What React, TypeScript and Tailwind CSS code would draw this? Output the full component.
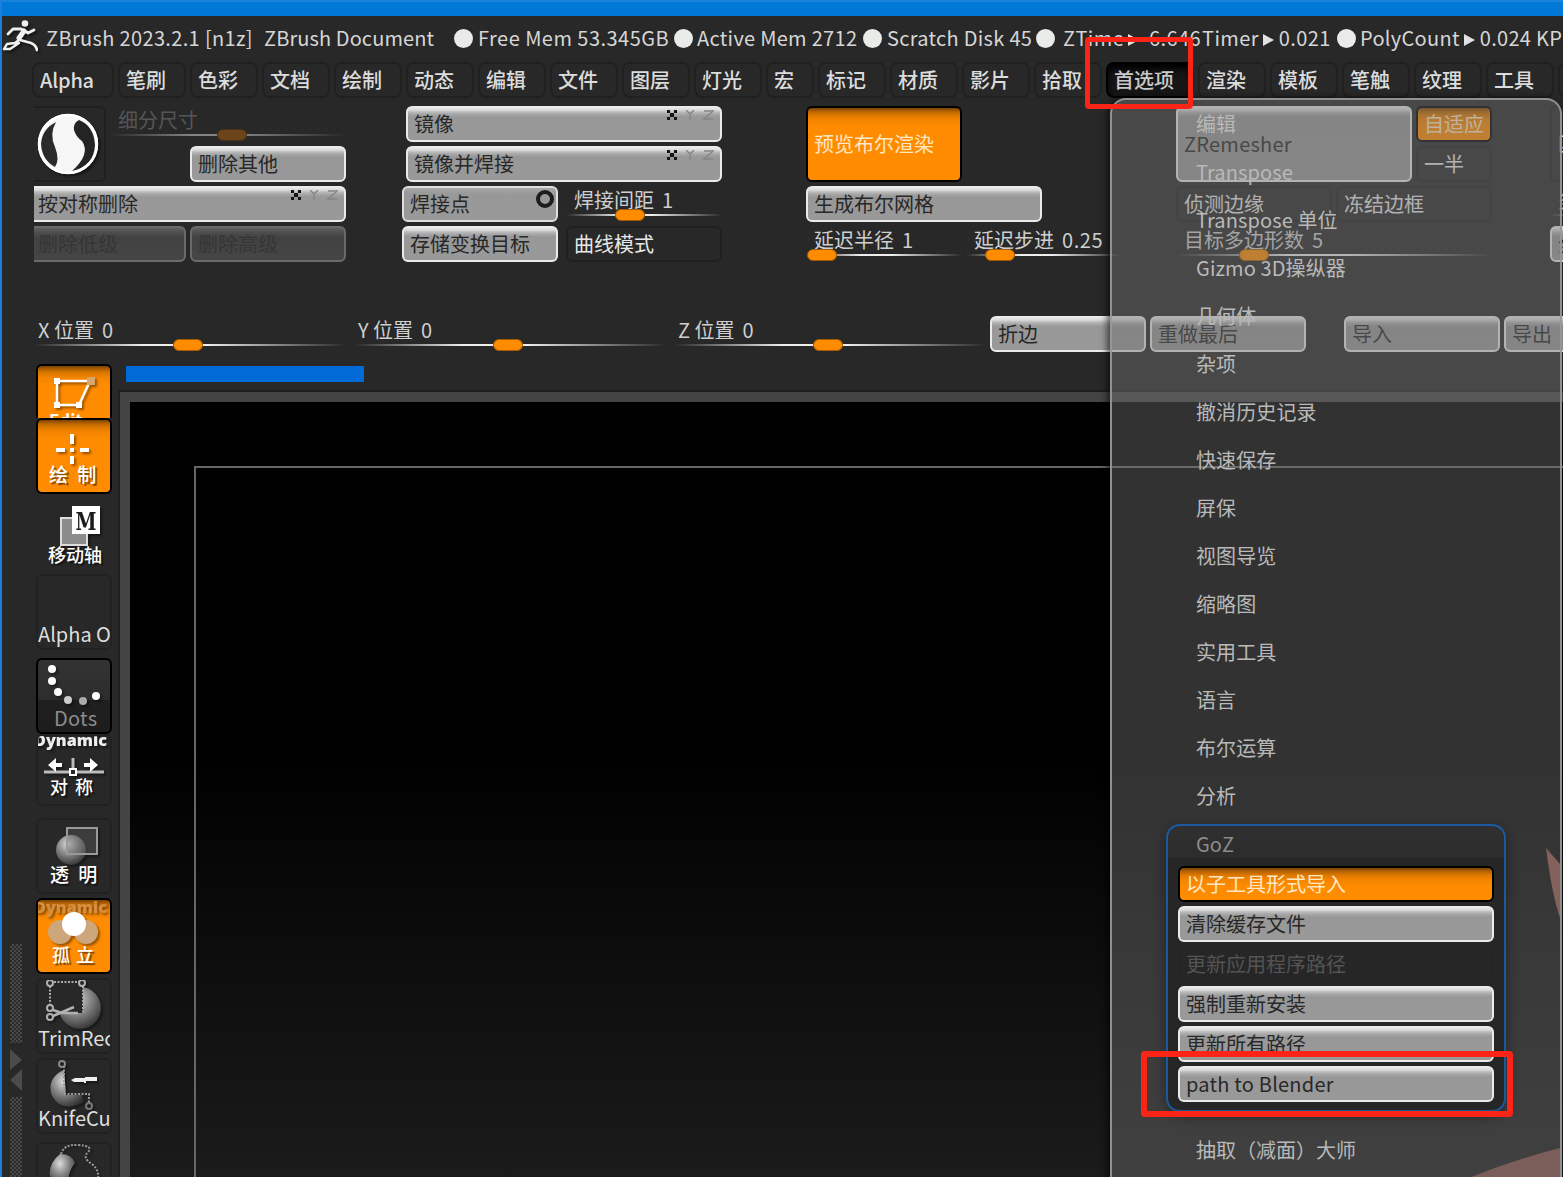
import React from "react";

type Kid = { children?: React.ReactNode };

const FONT = "font-['Noto_Sans_CJK_SC','Noto_Sans',sans-serif]";

function Tab({ label, w, active, ls = "" }: { label: string; w: string; active?: boolean; ls?: string }) {
  return (
    <div className={`h-9 shrink-0 rounded-[8px] border-2 pl-[6px] leading-[31px] text-[20px] font-medium overflow-hidden ${w} ${active ? "border-black bg-[#161616] shadow-[inset_0_5px_6px_#000] text-[#c9c9c9]" : "border-[#202020] text-[#dcdcdc]"}`}>
      <span className={ls}>{label}</span>
    </div>
  );
}

function Btn({ label, w, kind = "light", h = "h-9", children, square = "", ls = "" }: { label: string; w: string; kind?: "light" | "flat" | "off" | "dark" | "orange" | "ghost"; h?: string; square?: string; ls?: string } & Kid) {
  const kinds = {
    light: "border-[#ebebeb] bg-[linear-gradient(#e6e6e6_0px,#dadada_2px,#bcbcbc_4px,#a8a8a8_6px,#989898_9px,#999_100%)] text-[#282828]",
    flat: "border-[#dedede] bg-[linear-gradient(#a8a8a8_0px,#989898_6px,#999_100%)] text-[#282828]",
    off: "border-[#6a6a6a] bg-[linear-gradient(#606060_0px,#4c4c4c_5px,#424242_10px,#464646_100%)] text-[#363636]",
    dark: "border-[#202020] text-[#e8e8e8]",
    orange: "border-black bg-[linear-gradient(#784300_0px,#b06000_3px,#dc7800_7px,#f48500_12px,#ff8c00_19px,#ff8c00_100%)] text-[#ffe7c4]",
    ghost: "border-[#242424] text-[#545454]",
  };
  return (
    <div className={`relative flex shrink-0 items-center border-2 pl-[6px] pb-px text-[20px] leading-none whitespace-nowrap overflow-hidden ${w} ${h} ${kinds[kind]} ${square || "rounded-[6px]"}`}>
      <span className={`leading-[28px] ${ls}`}>{label}</span>
      {children}
    </div>
  );
}

function Axes() {
  return (
    <svg className="absolute right-[5px] top-[2px]" width="48" height="10" viewBox="0 0 48 10">
      <path d="M0 0h3v3h4v-3h3v3h-3v4h3v3h-3v-3h-4v3h-3v-3h3v-4h-3z" fill="#151515" />
      <path d="M19 0l4 4l4-4M23 4v6M37 1h9l-9 8h9" fill="none" stroke="#858585" strokeWidth="1.400" />
    </svg>
  );
}

function Slider({ label, value = "", w, knob, off, ls = "" }: { label: string; value?: string; w: string; knob: string; off?: boolean; ls?: string }) {
  return (
    <div className={`relative h-9 shrink-0 ${w}`}>
      <div className={`h-[28px] pl-2 text-[20px] leading-[27px] whitespace-pre ${off ? "text-[#565656]" : "text-[#cfcfcf]"}`}>
        <span className={ls}>{label}</span>
        <span className="ml-[8px] tracking-[0.6px]">{value}</span>
      </div>
      <div className={`h-[2px] ${off ? "bg-[linear-gradient(90deg,transparent,#858585_35%,#858585_55%,transparent)]" : "bg-[linear-gradient(90deg,transparent,#eee_35%,#eee_55%,transparent)]"}`} />
      <div className={`absolute top-[23px] h-3 w-[30px] rounded-[6px] border ${knob} ${off ? "border-[#4a3015] bg-[#6b4519]" : "border-[#a35b05] bg-[#ff8c00]"}`} />
    </div>
  );
}

function Dot() {
  return <span className="h-[19px] w-[19px] shrink-0 rounded-full bg-[#e9ebe9]" />;
}

function Arrow() {
  return (
    <svg className="ml-[4px] mr-[5px] inline-block align-[0px]" width="11" height="12" viewBox="0 0 11 12"><path d="M0 0L11 6L0 12Z" fill="#e2e2e2" /></svg>
  );
}

function TitleBar() {
  return (
    <header className="flex h-[46px] items-center whitespace-pre text-[20px] leading-[44px] text-[#d6d6d6] pb-[2px]">
      <svg className="mr-2 shrink-0 drop-shadow-[2px_2px_1px_rgba(0,0,0,.5)]" width="36" height="38" viewBox="0 0 36 38" fill="none" stroke="#eef1ee" strokeLinecap="round" strokeLinejoin="round">
        <circle cx="23" cy="4.500" r="3.300" fill="#eef1ee" stroke="none" />
        <path d="M6 15L11 10L19 10L26 14L32 11" strokeWidth="2.800" />
        <path d="M22 12L17 19" strokeWidth="5" />
        <path d="M18 21L29 24Q34 26 35 31" strokeWidth="2.800" />
        <path d="M17 21L13 24L5 25L2 30L8 30L17 24" strokeWidth="2.400" />
      </svg>
      <span className="w-[218px] shrink-0 tracking-[0.350px]">ZBrush 2023.2.1 [n1z]</span>
      <span className="w-[190px] shrink-0 tracking-[0.100px]">ZBrush Document</span>
      <Dot />
      <span className="ml-[5px] w-[196px] shrink-0 tracking-[0.470px]">Free Mem 53.345GB</span>
      <Dot />
      <span className="ml-[4px] w-[166px] shrink-0 tracking-[0.300px]">Active Mem 2712</span>
      <Dot />
      <span className="ml-[5px] w-[149px] shrink-0 tracking-[0.300px]">Scratch Disk 45</span>
      <Dot />
      <span className="ml-[8px] w-[139px] shrink-0 tracking-[0.400px]">ZTime<Arrow /> 6.646</span>
      <span className="w-[135px] shrink-0 tracking-[0.400px]">Timer<Arrow />0.021</span>
      <Dot />
      <span className="ml-[4px] shrink-0 tracking-[0.300px]">PolyCount<Arrow />0.024 KP</span>
    </header>
  );
}

function MenuBar() {
  return (
    <nav className="ml-[30px] flex h-9 gap-1">
      <Tab label="Alpha" w="w-[82px]" ls="tracking-[-0.200px]" />
      {["笔刷", "色彩", "文档", "绘制", "动态", "编辑", "文件", "图层", "灯光"].map((l) => (
        <Tab key={l} label={l} w="w-[68px]" />
      ))}
      <Tab label="宏" w="w-[48px]" />
      {["标记", "材质", "影片", "拾取"].map((l) => (
        <Tab key={l} label={l} w="w-[68px]" />
      ))}
      <Tab label="首选项" w="w-[88px]" active />
      {["渲染", "模板", "笔触", "纹理", "工具"].map((l) => (
        <Tab key={l} label={l} w="w-[68px]" />
      ))}
      <Tab label="" w="w-[68px]" />
    </nav>
  );
}

function Toolbar() {
  return (
    <section className="ml-[32px] mt-2 flex h-[156px]">
      <div className="flex w-[312px] shrink-0 flex-col gap-1">
        <div className="flex h-[76px]">
          <div className="flex w-[72px] shrink-0 items-center rounded-r-[6px] border-2 border-l-0 border-[#202020]">
            <svg className="drop-shadow-[2px_2px_1px_rgba(0,0,0,.5)]" width="68" height="68" viewBox="0 0 68 68">
              <circle cx="34" cy="34" r="30" fill="#f6f6f6" />
              <path d="M22 12Q15 24 21 37Q26 50 21 57Q8 50 7 34Q8 19 22 12Z" fill="#2b2b2b" />
              <path d="M45 10Q39 13 40 20Q42 27 48 31Q57 44 38 61Q60 56 61 35Q60 16 45 10Z" fill="#242424" />
              <circle cx="34" cy="34" r="29" fill="none" stroke="#fff" strokeWidth="2.500" />
            </svg>
          </div>
          <div className="flex flex-1 flex-col gap-1">
            <div className="ml-[4px]"><Slider label="细分尺寸" w="w-[236px]" knob="left-[107px]" off /></div>
            <div className="ml-[84px]"><Btn label="删除其他" w="w-[156px]" /></div>
          </div>
        </div>
        <Btn label="按对称删除" w="w-[312px]" square="rounded-r-[6px] border-l-0 !pl-1"><Axes /></Btn>
        <div className="flex gap-1">
          <Btn label="删除低级" w="w-[152px]" kind="off" square="rounded-r-[6px] border-l-0 !pl-1" />
          <Btn label="删除高级" w="w-[156px]" kind="off" />
        </div>
      </div>
      <div className="ml-[56px] flex w-[320px] shrink-0 flex-col gap-1">
        <div className="ml-1 flex flex-col gap-1">
          <Btn label="镜像" w="w-[316px]"><Axes /></Btn>
          <Btn label="镜像并焊接" w="w-[316px]"><Axes /></Btn>
        </div>
        <div className="flex gap-2">
          <Btn label="焊接点" w="w-[156px]" kind="flat">
            <span className="absolute right-[2px] top-[2px] h-[18px] w-[18px] rounded-full border-4 border-[#1c1c1c]" />
          </Btn>
          <Slider label="焊接间距" value="1" w="w-[156px]" knob="left-[49px]" />
        </div>
        <div className="flex gap-2">
          <Btn label="存储变换目标" w="w-[156px]" />
          <Btn label="曲线模式" w="w-[156px]" kind="dark" />
        </div>
      </div>
      <div className="ml-[84px] flex w-[316px] shrink-0 flex-col gap-1">
        <Btn label="预览布尔渲染" w="w-[156px]" h="h-[76px]" kind="orange" />
        <Btn label="生成布尔网格" w="w-[236px]" />
        <div className="flex gap-1">
          <Slider label="延迟半径" value="1" w="w-[156px]" knob="left-[1px]" />
          <Slider label="延迟步进" value="0.25" w="w-[156px]" knob="left-[19px]" />
        </div>
      </div>
      <div className="ml-[54px] flex w-[316px] shrink-0 flex-col gap-1">
        <div className="flex gap-1">
          <Btn label="ZRemesher" w="w-[236px]" h="h-[76px]" ls="tracking-[0.250px]" />
          <div className="flex flex-col gap-1">
            <Btn label="自适应" w="w-[76px]" kind="orange" />
            <Btn label="一半" w="w-[76px]" kind="dark" />
          </div>
        </div>
        <div className="flex gap-1">
          <Btn label="侦测边缘" w="w-[156px]" kind="dark" />
          <Btn label="冻结边框" w="w-[156px]" kind="dark" />
        </div>
        <Slider label="目标多边形数" value="5" w="w-[316px]" knob="left-[63px]" />
      </div>
      <div className="ml-[58px] flex shrink-0 flex-col gap-1">
        <Btn label="匹" w="w-[156px]" h="h-[76px]" kind="dark" />
        <Slider label="多" w="w-[156px]" knob="left-[63px]" />
        <Btn label="全" w="w-[156px]" />
      </div>
    </section>
  );
}

function PositionRow() {
  return (
    <section className="ml-[32px] mt-[54px] flex h-9">
      {["X 位置", "Y 位置", "Z 位置"].map((l) => (
        <div key={l} className="mr-2 -ml-[4px] pl-[4px] shrink-0 w-[316px]">
          <Slider label={l} value="0" w="w-[312px]" knob="left-[139px]" ls="-ml-[4px]" />
        </div>
      ))}
      <div className="-ml-[4px] flex gap-1">
        <Btn label="折边" w="w-[156px]" />
        <Btn label="重做最后" w="w-[156px]" />
        <div className="ml-[34px] flex gap-1">
          <Btn label="导入" w="w-[156px]" />
          <Btn label="导出" w="w-[156px]" />
        </div>
      </div>
    </section>
  );
}

function Tool({ h = "h-[76px]", mt = "", kind = "dark", label, lc = "", children }: { h?: string; mt?: string; kind?: "dark" | "orange" | "none" | "pressed"; label: string; lc?: string } & Kid) {
  const kinds = {
    dark: "border-[#222]",
    orange: "border-black bg-[linear-gradient(#784300_0px,#b06000_3px,#dc7800_7px,#f48500_12px,#ff8c00_20px,#ff8c00_100%)]",
    none: "border-transparent",
    pressed: "border-black bg-[linear-gradient(#333_0px,#2d2d2d_40px,#1f1f1f_40px,#1d1d1d_100%)]",
  };
  return (
    <div className={`relative w-[76px] shrink-0 overflow-hidden rounded-[6px] border-2 ${h} ${mt} ${kinds[kind]}`}>
      <svg className="absolute -left-[2px] -top-[2px] drop-shadow-[2px_2px_1px_rgba(0,0,0,.4)]" width="76" height="76" viewBox="0 0 76 76" fill="none">{children}</svg>
      <span className={`absolute whitespace-pre ${lc}`}>{label}</span>
    </div>
  );
}

const CN = "bottom-[4px] text-[19px] font-medium leading-[28px] text-white [text-shadow:2px_2px_1px_rgba(0,0,0,.5)]";
const EN = "bottom-[2px] left-0 text-[20px] leading-[24px] text-[#dedede]";

function ToolColumn() {
  return (
    <div className="flex w-[76px] flex-col">
      <Tool h="h-[54px] rounded-b-none border-b-0" kind="orange" label="Edit" lc="left-[11px] top-[43px] text-[17px] leading-[22px] font-bold text-white">
        <path d="M21 17H54L43 41H21Z" stroke="#fff" strokeWidth="2.500" />
        <path d="M18 14h6v6h-6zM18 38h6v6h-6zM40 38h6v6h-6z" fill="#fff" />
        <path d="M51 13h8v8h-8z" fill="#d6a66c" />
      </Tool>
      <Tool kind="orange" label="绘 制" lc={CN + " left-[11px] [word-spacing:5px]"}>
        <path d="M36 16v10M36 38v8M20 32h9M44 32h9M34 32h4" stroke="#fff" strokeWidth="4" />
      </Tool>
      <Tool kind="none" label="移动轴" lc={CN + " !bottom-0 left-[10px] !text-[18px]"}>
        <rect x="25" y="24" width="26" height="27" fill="#8c8c8c" stroke="#ddd" strokeWidth="2" />
        <rect x="36" y="12" width="28" height="28" fill="#fff" />
        <text x="50" y="36" textAnchor="middle" fontSize="24" fontWeight="900" fill="#1c1c1c" fontFamily="DejaVu Serif" textLength="21" lengthAdjust="spacingAndGlyphs">M</text>
      </Tool>
      <Tool mt="mt-1" label="Alpha O" lc={EN} />
      <Tool mt="mt-2" kind="pressed" label="Dots" lc="bottom-[2px] left-[16px] text-[20px] leading-[24px] tracking-[0.3px] text-[#8c8c8c]">
        <g fill="#fff">
          <circle cx="16" cy="11" r="4" /><circle cx="16" cy="23" r="4" /><circle cx="22" cy="34" r="4" /><circle cx="60" cy="38" r="4" />
          <circle cx="32" cy="42" r="4" fill="#ccc" /><circle cx="47" cy="43" r="4" fill="#aaa" />
        </g>
      </Tool>
      <Tool h="h-[72px]" label="对 称" lc={CN + " left-[12px] !text-[18px] [word-spacing:3px]"}>
        <path d="M8 38h60M37 24v10" stroke="#bbb" strokeWidth="3" />
        <rect x="34" y="35" width="6" height="6" fill="#282828" stroke="#fff" strokeWidth="2" />
        <path d="M12 31l8-7v5h6v4h-6v5zM62 31l-8-7v5h-6v4h6v5z" fill="#fff" />
        <text x="-2" y="12" fontSize="15" fontWeight="900" fill="#eee" fontFamily="Noto Sans" textLength="73" lengthAdjust="spacingAndGlyphs">Dynamic</text>
      </Tool>
      <Tool mt="mt-3" label="透 明" lc={CN + " left-[12px] [word-spacing:5px]"}>
        <circle cx="35" cy="32" r="15" fill="url(#ball)" />
        <rect x="31" y="10" width="30" height="26" fill="#666" fillOpacity=".4" stroke="#999" strokeWidth="2" />
      </Tool>
      <Tool mt="mt-1" kind="orange" label="孤 立" lc={CN + " left-[14px] !text-[18px] [word-spacing:2px]"}>
        <text x="-2" y="15" fontSize="15" fontWeight="900" fill="#d48f42" fontFamily="Noto Sans" textLength="73" lengthAdjust="spacingAndGlyphs">Dynamic</text>
        <circle cx="24" cy="34" r="12" fill="#cda77b" /><circle cx="50" cy="34" r="12" fill="#cda77b" />
        <circle cx="38" cy="26" r="12" fill="#fff" />
      </Tool>
      <Tool mt="mt-1" label="TrimRec" lc={EN}>
        <circle cx="44" cy="30" r="21" fill="url(#ball)" />
        <path d="M14 4H47V35H14Z" fill="#282828" />
        <path d="M14 8V28M18 4H43M47 8V35" stroke="#aaa" strokeWidth="2" strokeDasharray="2 1.500" />
        <g stroke="#b0b0b0" strokeWidth="2"><circle cx="14" cy="5" r="3" /><circle cx="46" cy="5" r="3" /><circle cx="14" cy="30" r="3" /><circle cx="14" cy="39" r="3" /><path d="M17 32L26 35H42M17 38L24 35L38 29" strokeWidth="2.600" /></g>
      </Tool>
      <Tool mt="mt-1" label="KnifeCu" lc={EN}>
        <path d="M28 12Q10 20 16 38Q26 56 48 44L46 37H30Z" fill="url(#ball)" />
        <path d="M28 8V36H53V46" stroke="#999" strokeWidth="2" strokeDasharray="2 1.500" />
        <circle cx="26" cy="6" r="3" stroke="#888" strokeWidth="2" /><circle cx="53" cy="48" r="3" stroke="#777" strokeWidth="2" />
        <path d="M35 22l4-2h10v-1h12v4h-11v2h-2v-1h-10z" fill="#eee" />
      </Tool>
      <Tool mt="mt-2" label="" lc="">
        <path d="M24 12Q8 25 17 44H34Q30 32 39 21Q36 12 24 12Z" fill="url(#ball)" />
        <path d="M25 12Q28 2 42 3Q58 4 52 10Q46 16 56 22Q66 30 60 44" stroke="#999" strokeWidth="2" strokeDasharray="2 1.500" />
      </Tool>
      <svg width="0" height="0"><defs><radialGradient id="ball" cx="40%" cy="30%" r="75%"><stop offset="0" stopColor="#ddd" /><stop offset=".45" stopColor="#8a8a8a" /><stop offset="1" stopColor="#303030" /></radialGradient></defs></svg>
    </div>
  );
}

function Rail() {
  const hatch = "bg-[repeating-conic-gradient(#4a4a4a_0_25%,#2a2a2a_0_50%)] bg-[length:4px_4px]";
  return (
    <div className="ml-2 mr-[14px] flex w-3 flex-col pt-[580px]">
      <div className={`h-[100px] ${hatch}`} />
      <svg className="my-[5px] shrink-0" width="12" height="44" viewBox="0 0 12 44" fill="#4b4b4b"><path d="M0 1L12 12L0 22ZM12 21L0 32L12 43Z" /></svg>
      <div className={`h-[80px] ${hatch}`} />
    </div>
  );
}

function Workspace() {
  return (
    <section className="mt-3 flex h-[813px]">
      <Rail />
      <ToolColumn />
      <div className="ml-[6px] flex flex-1 flex-col">
        <div className="ml-[8px] mt-[2px] h-4 w-[238px] shrink-0 bg-[#006ad6]" />
        <div className="mt-2 flex-1 border-l-2 border-t-2 border-[#1f1f1f]">
          <div className="h-full border-l-[10px] border-t-[10px] border-[#444] bg-[linear-gradient(#000_0%,#000_45%,#1b1b1b_100%)] pl-[64px] pt-[64px]">
            <div className="h-full border-l-2 border-t-2 border-[#666]" />
          </div>
        </div>
      </div>
    </section>
  );
}

function PreferencesMenu() {
  const items = ["编辑", "Transpose", "Transpose 单位", "Gizmo 3D操纵器", "几何体", "杂项", "撤消历史记录", "快速保存", "屏保", "视图导览", "缩略图", "实用工具", "语言", "布尔运算", "分析"];
  return (
    <aside className="absolute left-[1108px] top-[98px] h-[1100px] w-[452px] overflow-hidden rounded-t-[16px] border-2 border-[#999]/90 bg-[#6e6e6e]/45 text-[20px] text-[#b9b9b9] shadow-[-3px_0_7px_rgba(0,0,0,.6)]">
      <svg className="absolute left-0 top-0" width="448" height="1080">
        <path d="M434 748L448 764V818Q440 795 434 748Z" fill="#84615c" />
        <path d="M352 1080Q400 1060 448 1048V1080Z" fill="#7b5d5a" />
      </svg>
      <div className="relative">
        {items.map((l) => (
          <div key={l} className="h-12 pl-[84px] leading-[47px] whitespace-pre tracking-[0.1px]">{l}</div>
        ))}
        <div className="ml-[54px] mt-[4px] h-[288px] w-[340px] rounded-[14px] border-2 border-[#195a9f] bg-[linear-gradient(#303030_0px,#2c2c2c_32px,#262626_32px)] shadow-[0_4px_14px_rgba(0,0,0,.35)]">
          <div className="h-10 pl-[28px] leading-[36px] text-[#8c8c8c]">GoZ</div>
          <div className="ml-[10px] flex flex-col gap-1">
            <Btn label="以子工具形式导入" w="w-[316px]" kind="orange" />
            <Btn label="清除缓存文件" w="w-[316px]" />
            <Btn label="更新应用程序路径" w="w-[316px]" kind="ghost" />
            <Btn label="强制重新安装" w="w-[316px]" />
            <Btn label="更新所有路径" w="w-[316px]" />
            <Btn label="path to Blender" w="w-[316px]" ls="tracking-[0.220px]" />
          </div>
        </div>
        <div className="mt-[14px] pl-[84px] leading-[47px]">抽取（减面）大师</div>
      </div>
    </aside>
  );
}

export default function App() {
  return (
    <main className={`relative flex h-[1177px] w-[1563px] flex-col overflow-hidden border-l-2 border-[#1a7fd8] bg-[#282828] ${FONT}`}>
      <div className="h-4 shrink-0 border-t-2 border-[#1a83db] bg-[#0078d7]" />
      <TitleBar />
      <MenuBar />
      <Toolbar />
      <PositionRow />
      <Workspace />
      <PreferencesMenu />
      <div className="absolute left-[1083px] top-[37px] h-[72px] w-[108px] rounded-[4px] border-[5px] border-[#fb2417]" />
      <div className="absolute left-[1139px] top-[1051px] h-[66px] w-[372px] rounded-[4px] border-[6px] border-[#fb2417]" />
    </main>
  );
}
